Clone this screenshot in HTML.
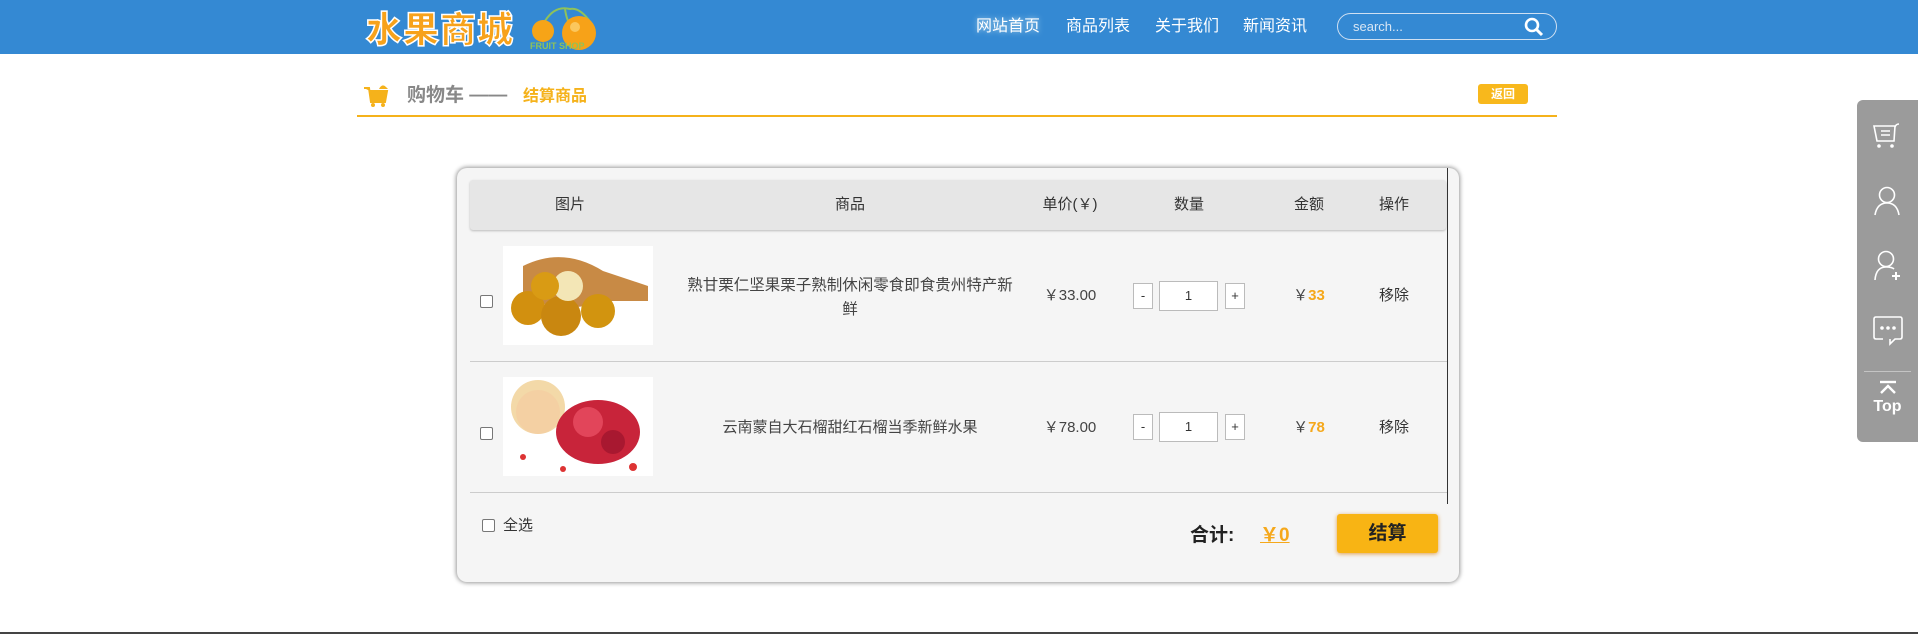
<!DOCTYPE html>
<html><head><meta charset="utf-8"><style>
*{margin:0;padding:0;box-sizing:border-box}
body{width:1918px;height:634px;overflow:hidden;background:#fff;font-family:"Liberation Sans","Noto Sans CJK SC",sans-serif;position:relative;color:#333}
.a{position:absolute}
.hdr{left:0;top:0;width:1918px;height:54px;background:#3489d3}
.logo{left:366px;top:5px;font-size:36px;font-weight:900;color:#f7a21b;-webkit-text-stroke:1.5px #fff;letter-spacing:1px;font-family:"Noto Sans CJK SC",sans-serif;line-height:44px}
.nav{top:16px;color:#fff;font-size:16px;line-height:22px}
.srch{left:1337px;top:13px;width:220px;height:27px;border:1px solid #cfe0f2;border-radius:14px;color:#d8e6f4;font-size:13px;line-height:25px;padding-left:15px}
.th{top:180px;height:50px;line-height:50px;font-size:15px;color:#333;transform:translateX(-50%)}
.c{transform:translateX(-50%);font-size:15px;color:#444;text-align:center}
.cb{width:13px;height:13px;border:1px solid #777;border-radius:2px;background:#fff}
.qb{width:20px;height:26px;border:1px solid #bbb;background:#fff;font-size:13px;text-align:center;line-height:24px;color:#333}
.qi{width:59px;height:30px;border:1px solid #bbb;background:#fff;font-size:13px;text-align:center;line-height:28px}
.side svg{position:absolute;left:16px}
</style></head><body>
<div class="a hdr"></div>
<div class="a logo">水果商城</div>
<svg class="a" style="left:525px;top:3px" width="80" height="50" viewBox="0 0 80 50">
<path d="M20 18 Q30 2 45 6 Q55 4 66 20" stroke="#8fc25a" stroke-width="2" fill="none"/>
<path d="M40 6 Q42 20 48 26" stroke="#8fc25a" stroke-width="2" fill="none"/>
<circle cx="18" cy="28" r="11" fill="#f6a417"/><circle cx="54" cy="30" r="17" fill="#f7a218"/>
<circle cx="50" cy="24" r="5" fill="#fcd77a" opacity=".7"/>
<text x="5" y="46" font-size="9" font-weight="bold" fill="#8fc25a" font-family="Liberation Sans">FRUIT   SHOP</text>
</svg>
<div class="a nav" style="left:976px;text-shadow:0 0 6px #bde">网站首页</div>
<div class="a nav" style="left:1066px">商品列表</div>
<div class="a nav" style="left:1155px">关于我们</div>
<div class="a nav" style="left:1243px">新闻资讯</div>
<div class="a srch">search...</div>
<svg class="a" style="left:1524px;top:17px" width="20" height="20" viewBox="0 0 20 20"><circle cx="8" cy="8" r="6" stroke="#fff" stroke-width="2.6" fill="none"/><path d="M12.5 12.5 L18 18" stroke="#fff" stroke-width="3"/></svg>

<svg class="a" style="left:364px;top:83px" width="26" height="25" viewBox="0 0 26 25"><path d="M0 5 H5 L7 19 H21 L23 8 H6" fill="#f5b21b" stroke="#f5b21b" stroke-width="2"/><circle cx="9" cy="22" r="2" fill="#f5b21b"/><circle cx="19" cy="22" r="2" fill="#f5b21b"/><path d="M15 6 Q18 0 22 4 L24 6Z" fill="#f5b21b"/></svg>
<div class="a" style="left:407px;top:83px;font-size:19px;font-weight:bold;color:#888;line-height:26px">购物车 ——</div>
<div class="a" style="left:523px;top:85px;font-size:16px;font-weight:bold;color:#f5b21b;line-height:24px">结算商品</div>
<div class="a" style="left:1478px;top:84px;width:50px;height:20px;background:#f8b81c;border-radius:3px;color:#fff;font-size:12px;text-align:center;line-height:20px;font-weight:bold">返回</div>
<div class="a" style="left:357px;top:115px;width:1200px;height:2px;background:#f5b21b"></div>

<div class="a" style="left:457px;top:168px;width:1002px;height:414px;background:#f5f5f5;border-radius:10px;box-shadow:0 0 4px 1px #999"></div>
<div class="a" style="left:470px;top:180px;width:976px;height:50px;background:#e6e6e6;border-radius:3px;box-shadow:0 1px 2px #bbb"></div>
<div class="a" style="left:1447px;top:168px;width:1px;height:336px;background:#333"></div>
<div class="a th" style="left:570px">图片</div>
<div class="a th" style="left:850px">商品</div>
<div class="a th" style="left:1070px">单价(￥)</div>
<div class="a th" style="left:1189px">数量</div>
<div class="a th" style="left:1309px">金额</div>
<div class="a th" style="left:1394px">操作</div>

<div class="a" style="left:470px;top:361px;width:977px;height:1px;background:#ccc"></div>
<div class="a" style="left:470px;top:492px;width:977px;height:1px;background:#ccc"></div>

<!-- row1 -->
<div class="a cb" style="left:480px;top:295px"></div>
<svg class="a" style="left:503px;top:246px" width="150" height="99" viewBox="0 0 150 99"><rect width="150" height="99" fill="#fff"/><path d="M20 20 Q60 0 100 25 L145 40 L145 55 L100 55 Q60 70 20 50Z" fill="#c88a45"/><circle cx="25" cy="62" r="17" fill="#d2900f"/><circle cx="58" cy="70" r="20" fill="#c98710"/><circle cx="95" cy="65" r="17" fill="#d2940f"/><circle cx="65" cy="40" r="15" fill="#f3e6b6"/><circle cx="42" cy="40" r="14" fill="#d99b14"/></svg>
<div class="a c" style="left:850px;top:274px;width:332px;line-height:24px;font-size:15.5px">熟甘栗仁坚果栗子熟制休闲零食即食贵州特产新鲜</div>
<div class="a c" style="left:1070px;top:286px;line-height:20px">￥33.00</div>
<div class="a qb" style="left:1133px;top:283px">-</div>
<div class="a qi" style="left:1159px;top:281px">1</div>
<div class="a qb" style="left:1225px;top:283px">+</div>
<div class="a c" style="left:1309px;top:286px;line-height:20px">￥<b style="color:#f5a81b">33</b></div>
<div class="a c" style="left:1394px;top:286px;line-height:20px;color:#333">移除</div>

<!-- row2 -->
<div class="a cb" style="left:480px;top:427px"></div>
<svg class="a" style="left:503px;top:377px" width="150" height="99" viewBox="0 0 150 99"><rect width="150" height="99" fill="#fff"/><circle cx="35" cy="30" r="27" fill="#f3d9a8"/><circle cx="35" cy="35" r="22" fill="#f5c9a0" opacity=".6"/><ellipse cx="95" cy="55" rx="42" ry="32" fill="#c8243a"/><circle cx="85" cy="45" r="15" fill="#e2455a"/><circle cx="110" cy="65" r="12" fill="#a81830"/><circle cx="20" cy="80" r="3" fill="#d33"/><circle cx="60" cy="92" r="3" fill="#d33"/><circle cx="130" cy="90" r="4" fill="#d33"/></svg>
<div class="a c" style="left:850px;top:418px;width:340px;line-height:20px">云南蒙自大石榴甜红石榴当季新鲜水果</div>
<div class="a c" style="left:1070px;top:418px;line-height:20px">￥78.00</div>
<div class="a qb" style="left:1133px;top:414px">-</div>
<div class="a qi" style="left:1159px;top:412px">1</div>
<div class="a qb" style="left:1225px;top:414px">+</div>
<div class="a c" style="left:1309px;top:418px;line-height:20px">￥<b style="color:#f5a81b">78</b></div>
<div class="a c" style="left:1394px;top:418px;line-height:20px;color:#333">移除</div>

<!-- footer -->
<div class="a cb" style="left:482px;top:519px"></div>
<div class="a" style="left:503px;top:516px;font-size:15px;line-height:20px">全选</div>
<div class="a" style="left:1190px;top:523px;font-size:19px;font-weight:bold;line-height:26px;color:#222">合计:</div>
<div class="a" style="left:1260px;top:523px;font-size:19px;font-weight:bold;line-height:26px;color:#f5a81b;text-decoration:underline">￥0</div>
<div class="a" style="left:1337px;top:514px;width:101px;height:39px;background:#f8b414;border-radius:3px;box-shadow:0 1px 4px #e0a050;font-size:19px;font-weight:bold;text-align:center;line-height:39px;color:#222">结算</div>

<div class="a" style="left:0;top:632px;width:1918px;height:2px;background:#444"></div>

<!-- sidebar -->
<div class="a side" style="left:1857px;top:100px;width:61px;height:342px;background:#9b9b9b;border-radius:6px 0 0 6px">
<svg style="top:23px" width="28" height="26" viewBox="0 0 28 26" fill="none" stroke="#fff" stroke-width="1.6"><path d="M1 3 H22 L21 18 H4 Z"/><path d="M22 4 Q23 1 26 1"/><path d="M8 8 H17 M8 12 H17"/><circle cx="6" cy="23" r="1" fill="#fff"/><circle cx="19" cy="23" r="1" fill="#fff"/></svg>
<svg style="top:86px" width="28" height="30" viewBox="0 0 28 30" fill="none" stroke="#fff" stroke-width="1.6"><circle cx="14" cy="9" r="7.5"/><path d="M2 29 Q4 17 14 17 Q24 17 26 29"/></svg>
<svg style="top:150px" width="30" height="32" viewBox="0 0 30 32" fill="none" stroke="#fff" stroke-width="1.6"><circle cx="13" cy="9" r="7.5"/><path d="M2 30 Q3 17 13 17 Q19 17 21 19"/><path d="M19 26 H27 M23 22 V30" stroke-width="2"/></svg>
<svg style="top:216px" width="30" height="30" viewBox="0 0 30 30" fill="none" stroke="#fff" stroke-width="1.6"><path d="M10 23 H3 Q1 23 1 21 V3 Q1 1 3 1 H27 Q29 1 29 3 V21 Q29 23 27 23 H22 L17 28 L17 23"/><circle cx="9" cy="12" r="1" fill="#fff"/><circle cx="15" cy="12" r="1" fill="#fff"/><circle cx="21" cy="12" r="1" fill="#fff"/></svg>
<div style="position:absolute;left:7px;top:271px;width:47px;height:1px;background:#c4c4c4"></div>
<svg style="top:280px;left:21px" width="20" height="14" viewBox="0 0 20 14" fill="none" stroke="#fff" stroke-width="2.4"><path d="M2 2 H18"/><path d="M3 13 L10 6 L17 13"/></svg>
<div style="position:absolute;left:0;top:298px;width:61px;text-align:center;color:#fff;font-weight:bold;font-size:16px">Top</div>
</div>
</body></html>
